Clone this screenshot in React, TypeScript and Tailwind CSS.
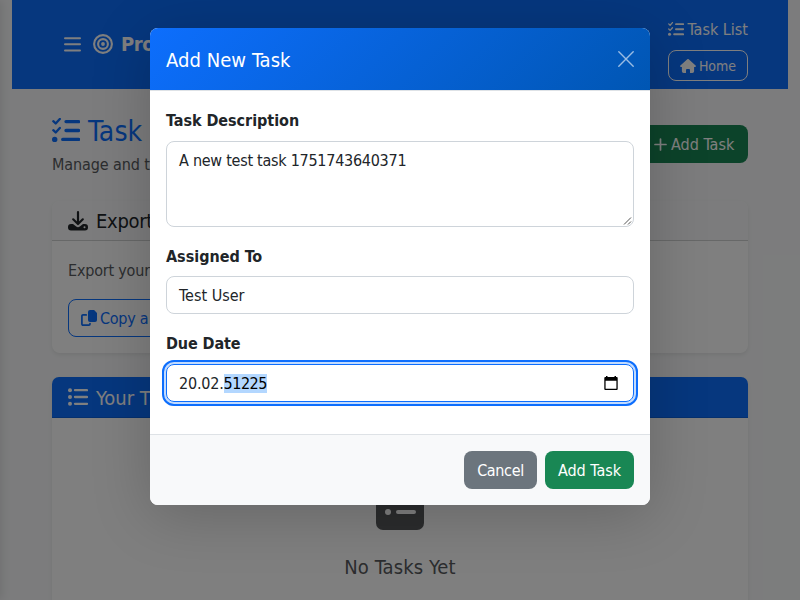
import type { ReactNode } from "react";

const ListCheck = ({ className }: { className: string }) => (
  <svg viewBox="0 0 28 26" className={className} fill="none" stroke="currentColor" strokeLinecap="round" strokeLinejoin="round">
    <path strokeWidth="2.3" d="M1.3 3.2 3.7 5.5 7.8 .9M1.3 12.2 3.7 14.5 7.8 9.9" />
    <path strokeWidth="3.3" d="M14 3.6h12.6M14 12.5h12.6M10.7 21.4h15.9" />
    <circle cx="2.7" cy="21.4" r="2.7" fill="currentColor" stroke="none" />
  </svg>
);

const Bars = () => (
  <svg width="17" height="15" viewBox="0 0 17 15" stroke="currentColor" strokeWidth="2" strokeLinecap="round">
    <path d="M1 1.2h15M1 7.3h15M1 13.4h15" />
  </svg>
);

const Bullseye = () => (
  <svg width="20" height="20" viewBox="0 0 20 20" fill="none" stroke="currentColor" strokeWidth="2.1">
    <circle cx="10" cy="10" r="8.9" />
    <circle cx="10" cy="10" r="4.9" />
    <circle cx="10" cy="10" r="1.9" fill="currentColor" stroke="none" />
  </svg>
);

const House = () => (
  <svg width="16" height="14" viewBox="0 0 16 14" fill="currentColor">
    <path d="M7.3.3a1 1 0 0 1 1.4 0l6.9 6.2c.7.7.2 1.5-.6 1.5h-.9v4.2A1.8 1.8 0 0 1 12.3 14H10v-3a1 1 0 0 0-1-1H7a1 1 0 0 0-1 1v3H3.7a1.8 1.8 0 0 1-1.8-1.8V8H1C.2 8-.3 7.2.4 6.5z" />
  </svg>
);

const Plus = () => (
  <svg width="13" height="13" viewBox="0 0 13 13" stroke="currentColor" strokeWidth="1.7" strokeLinecap="round">
    <path d="M6.5 1v11M1 6.5h11" />
  </svg>
);

const Download = () => (
  <svg width="20" height="20" viewBox="0 0 20 20" fill="none" stroke="currentColor" strokeLinecap="round" strokeLinejoin="round">
    <path strokeWidth="2.2" d="M10 1.2v11.6M5.2 8.3 10 13l4.8-4.7" />
    <path fill="currentColor" stroke="none" fillRule="evenodd" d="M3 13h2l3.2 2.6c1.1.9 2.5.9 3.6 0L15 13h2a3 3 0 0 1 3 3v.5a3 3 0 0 1-3 3H3a3 3 0 0 1-3-3V16a3 3 0 0 1 3-3zm13.5 2.2a1 1 0 1 0 0 2 1 1 0 0 0 0-2z" />
  </svg>
);

const Copy = () => (
  <svg width="16" height="16" viewBox="0 0 16 16" fill="none">
    <path fill="currentColor" d="M9 0h4.1L16 2.9V10a2 2 0 0 1-2 2H9a2 2 0 0 1-2-2V2a2 2 0 0 1 2-2z" />
    <path stroke="currentColor" strokeWidth="1.7" strokeLinecap="round" strokeLinejoin="round" d="M5.2 4.9H2A1.1 1.1 0 0 0 .9 6v8A1.1 1.1 0 0 0 2 15.1h5.9A1.1 1.1 0 0 0 9 14v-.4" />
  </svg>
);

const ListIcon = () => (
  <svg width="20" height="18" viewBox="0 0 20 18" stroke="currentColor" strokeWidth="2.3" strokeLinecap="round">
    <path d="M7 2.2h12M7 9h12M7 15.8h12" />
    <g fill="currentColor" stroke="none">
      <circle cx="2" cy="2.2" r="2" />
      <circle cx="2" cy="9" r="2" />
      <circle cx="2" cy="15.8" r="2" />
    </g>
  </svg>
);

const EmptyList = () => (
  <svg width="48" height="42" viewBox="0 0 48 42" className="text-[#56585a]">
    <rect width="48" height="42" rx="7" fill="currentColor" />
    <g fill="white">
      <circle cx="12" cy="14" r="3" />
      <rect x="20" y="12" width="20" height="4" rx="2" />
      <circle cx="12" cy="24" r="3" />
      <rect x="20" y="22" width="20" height="4" rx="2" />
    </g>
  </svg>
);

const Calendar = () => (
  <svg width="14" height="14" viewBox="0 0 14 14">
    <path fill="black" fillRule="evenodd" d="M2 0h1.5v1h7V0H12v1h.7q1 0 1 1v11q0 1-1 1H1.3q-1 0-1-1V2q0-1 1-1H2zM1.6 4.7v8h10.8v-8z" />
  </svg>
);

const Label = ({ children, className }: { children: ReactNode; className: string }) => (
  <div className={`h-6 font-bold whitespace-nowrap ${className}`}>{children}</div>
);

function Page() {
  return (
    <div className="h-full w-full overflow-hidden bg-[#f8f9fa] px-3 text-[#212529] whitespace-nowrap">
      <header className="flex h-[89px] justify-between bg-[#0d6efd] pr-10 pl-[52px] text-white">
        <div className="flex h-[88px] items-center">
          <Bars />
          <span className="ml-3"><Bullseye /></span>
          <span className="ml-2 text-[20px] font-bold tracking-[-0.4px]">Pro</span>
        </div>
        <div className="flex w-20 flex-col pt-[17px]">
          <div className="flex h-6 items-center justify-between">
            <ListCheck className="h-[15px] w-4" />
            <span className="pt-[2px]">Task List</span>
          </div>
          <div className="mt-[9px] flex h-[31px] items-center rounded-lg border border-white pl-[11px] text-sm">
            <House />
            <span className="ml-[3px] tracking-[-0.1px]">Home</span>
          </div>
        </div>
      </header>
      <main className="px-10">
        <div className="flex h-28 justify-between pt-6">
          <div>
            <div className="flex h-[35px] items-center text-[#0d6efd]">
              <ListCheck className="h-[26px] w-7" />
              <h1 className="ml-[8px] pt-[2px] text-[28px] leading-[35px] tracking-[0.1px]">Task</h1>
            </div>
            <p className="mt-[3px] pt-[2px] leading-6 tracking-[-0.1px] text-[#585b5e]">Manage and t</p>
          </div>
          <div className="mt-3 flex h-[38px] w-[106px] items-center rounded-lg bg-[#198754] pl-3 text-white">
            <Plus />
            <span className="ml-1 pt-[2px]">Add Task</span>
          </div>
        </div>
        <section className="h-[152px] rounded-lg bg-white shadow-[0_2px_4px_rgba(0,0,0,0.075)]">
          <div className="flex h-10 items-center rounded-t-lg border-b border-[#cfd0d1] bg-[#f8f9fa] pl-4 text-[20px]">
            <Download />
            <span className="ml-2 tracking-[-0.3px]">Export</span>
          </div>
          <div className="px-4 pt-[18px]">
            <p className="leading-6 tracking-[-0.2px] text-[#585b5e]">Export your</p>
            <div className="mt-4 flex h-[38px] w-36 items-center rounded-lg border border-[#0d6efd] pl-3 text-[#0d6efd]">
              <Copy />
              <span className="ml-[3px] pt-[2px] tracking-[-0.25px]">Copy a</span>
            </div>
          </div>
        </section>
        <section className="mt-6 h-[300px] rounded-lg bg-white shadow-[0_2px_4px_rgba(0,0,0,0.075)]">
          <div className="flex h-[41px] items-center rounded-t-[7px] border-b border-[#0b60dd] bg-[#0d6efd] pl-4 text-[20px] text-white">
            <ListIcon />
            <span className="ml-2 pt-[2px]">Your T</span>
          </div>
          <div className="flex flex-col items-center pt-[70px]">
            <EmptyList />
            <p className="mt-[25px] text-[20px] leading-6 tracking-[0.1px] text-[#585b5e]">No Tasks Yet</p>
          </div>
        </section>
      </main>
    </div>
  );
}

function TaskDialog() {
  return (
    <div className="absolute top-7 left-[150px] flex h-[477px] w-[500px] flex-col overflow-hidden rounded-lg bg-white text-[#212529]">
      <div className="flex h-[63px] shrink-0 items-center justify-between border-b border-[#dee2e6] bg-[linear-gradient(135deg,#0d6efd,#0056b3)] px-4 text-white">
        <h2 className="pt-[2px] text-[20px] leading-[30px] tracking-[0.05px]">Add New Task</h2>
        <svg width="16" height="16" viewBox="0 0 16 16" stroke="white" strokeWidth="1.4" strokeLinecap="round" className="opacity-60">
          <path d="M.8.8 15.2 15.2M15.2.8.8 15.2" />
        </svg>
      </div>
      <div className="h-[343px] shrink-0 px-4 pt-[18px]">
        <Label className="mb-2 leading-6 tracking-[-0.04px]">Task Description</Label>
        <div className="flex h-[86px] items-start justify-between rounded-lg border border-[#ced4da] pt-[7px] pl-3">
          <span className="leading-6 tracking-[-0.26px]">A new test task 1751743640371</span>
          <svg width="10" height="10" viewBox="0 0 10 10" className="self-end" stroke="#555" strokeWidth="1">
            <path d="M1 8.5 8 1.5M5 8.5l3-3" />
          </svg>
        </div>
        <div className="h-[17px]" />
        <Label className="mb-2 leading-[26px] tracking-[-0.02px]">Assigned To</Label>
        <div className="flex h-[38px] items-center rounded-lg border border-[#ced4da] pt-[2px] pl-3">Test User</div>
        <div className="h-[17px]" />
        <Label className="mb-[9px] leading-[26px] tracking-[-0.1px]">Due Date</Label>
        <div className="flex h-[38px] items-center justify-between rounded-lg border border-[#0d6efd] pr-[15px] pl-3 shadow-[0_0_0_4px_#c2dbfe] outline-2 outline-offset-2 outline-[#0d6efd]">
          <span className="flex items-center">
            <span className="leading-[19px] tracking-[-0.2px]">20.02.</span>
            <span className="h-[19px] bg-[#b3d7ff] leading-[19px] tracking-[-0.5px] text-black">51225</span>
          </span>
          <Calendar />
        </div>
      </div>
      <div className="flex grow items-start justify-end gap-2 border-t border-[#dee2e6] bg-[#f8f9fa] px-4 pt-4 text-white">
        <button className="h-[38px] w-[73px] rounded-lg bg-[#6c757d] pt-[2px] tracking-[-0.35px]">Cancel</button>
        <button className="h-[38px] w-[89px] rounded-lg bg-[#198754] pt-[2px]">Add Task</button>
      </div>
    </div>
  );
}

export default function App() {
  return (
    <div className="relative h-[600px] w-[800px] overflow-hidden font-['DejaVu_Sans_Condensed','DejaVu_Sans',sans-serif] text-base [font-stretch:75%]">
      <Page />
      <div className="absolute inset-y-0 -left-4 w-4 shadow-[2px_0_10px_rgba(0,0,0,0.1)]" />
      <div className="absolute inset-0 bg-black/50" />
      <div className="absolute top-7 left-[150px] h-[477px] w-[500px] rounded-lg shadow-[0_10px_60px_rgba(0,0,0,0.2)]" />
      <TaskDialog />
    </div>
  );
}
